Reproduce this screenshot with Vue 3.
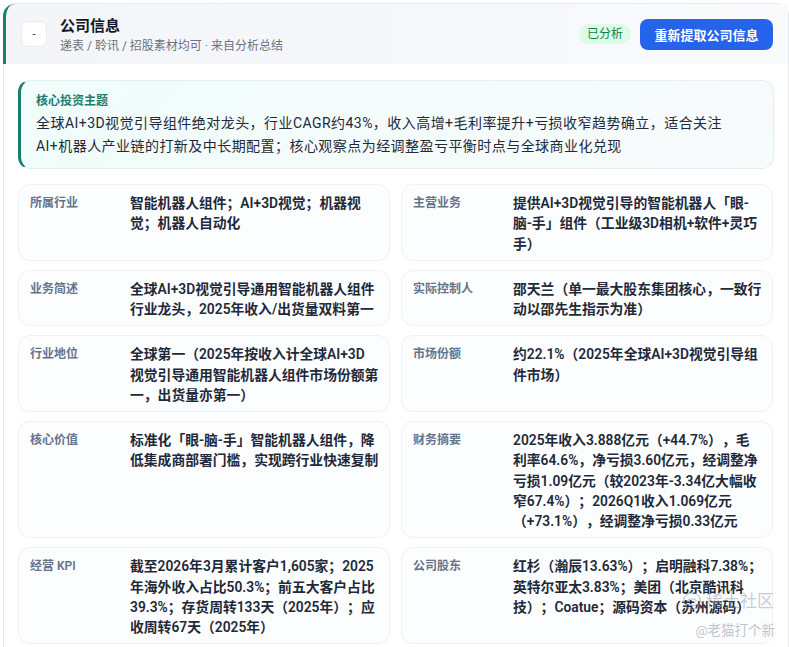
<template>
  <div class="page">
    <section class="company-card">
      <header class="card-head">
        <div class="head-left">
          <span class="head-icon">-</span>
          <div class="head-text">
            <h2>公司信息</h2>
            <p>递表 / 聆讯 / 招股素材均可 · 来自分析总结</p>
          </div>
        </div>
        <div class="head-right">
          <span class="status-pill">已分析</span>
          <button type="button" class="refetch-btn">重新提取公司信息</button>
        </div>
      </header>

      <div class="card-body">
        <div class="theme-box">
          <div class="theme-title">核心投资主题</div>
          <p>{{ theme }}</p>
        </div>

        <div class="info-grid">
          <article v-for="item in items" :key="item.label" class="info-cell">
            <span class="info-label">{{ item.label }}</span>
            <span class="info-value">{{ item.value }}</span>
          </article>
        </div>
      </div>
    </section>

    <div class="watermark">
      <div class="wm-top">
        <svg width="24" height="22" viewBox="0 0 26 22" fill="none" stroke="currentColor" stroke-width="1.5">
          <circle cx="13" cy="11" r="9" />
          <path d="M8 11c1.5-3 8.500-3 10 0M8 14.500c2.500 2 7.500 2 10 0" />
        </svg>
        <span>稀土社区</span>
      </div>
      <div class="wm-sub">@老猫打个新</div>
    </div>
  </div>
</template>

<script setup>
const theme = '全球AI+3D视觉引导组件绝对龙头，行业CAGR约43%，收入高增+毛利率提升+亏损收窄趋势确立，适合关注\nAI+机器人产业链的打新及中长期配置；核心观察点为经调整盈亏平衡时点与全球商业化兑现'

const items = [
  { label: '所属行业', value: '智能机器人组件；AI+3D视觉；机器视\n觉；机器人自动化' },
  { label: '主营业务', value: '提供AI+3D视觉引导的智能机器人「眼-\n脑-手」组件（工业级3D相机+软件+灵巧\n手）' },
  { label: '业务简述', value: '全球AI+3D视觉引导通用智能机器人组件\n行业龙头，2025年收入/出货量双料第一' },
  { label: '实际控制人', value: '邵天兰（单一最大股东集团核心，一致行\n动以邵先生指示为准）' },
  { label: '行业地位', value: '全球第一（2025年按收入计全球AI+3D\n视觉引导通用智能机器人组件市场份额第\n一，出货量亦第一）' },
  { label: '市场份额', value: '约22.1%（2025年全球AI+3D视觉引导组\n件市场）' },
  { label: '核心价值', value: '标准化「眼-脑-手」智能机器人组件，降\n低集成商部署门槛，实现跨行业快速复制' },
  { label: '财务摘要', value: '2025年收入3.888亿元（+44.7%），毛\n利率64.6%，净亏损3.60亿元，经调整净\n亏损1.09亿元（较2023年-3.34亿大幅收\n窄67.4%）；2026Q1收入1.069亿元\n（+73.1%），经调整净亏损0.33亿元' },
  { label: '经营 KPI', value: '截至2026年3月累计客户1,605家；2025\n年海外收入占比50.3%；前五大客户占比\n39.3%；存货周转133天（2025年）；应\n收周转67天（2025年）' },
  { label: '公司股东', value: '红杉（瀚辰13.63%）；启明融科7.38%；\n英特尔亚太3.83%；美团（北京酷讯科\n技）；Coatue；源码资本（苏州源码）' }
]
</script>

<style>
html, body {
  margin: 0;
  background: #fff;
}
</style>

<style scoped>
.page {
  position: relative;
  width: 789px;
  height: 647px;
  overflow: hidden;
  padding: 3px 0 0 3px;
  box-sizing: border-box;
  font-family: "Roboto", "Noto Sans CJK SC", sans-serif;
  color: #1f2937;
  text-spacing-trim: space-all;
}

.company-card {
  width: 785px;
  border: 1px solid #e5e9ef;
  border-left: 0;
  border-radius: 12px 12px 0 0;
  background: #fff;
}

.card-head {
  display: flex;
  align-items: center;
  justify-content: space-between;
  height: 60px;
  padding: 0 15px;
  border-left: 3px solid #1c7c6e;
  border-radius: 12px 0 0 0;
  background: linear-gradient(90deg, #f3f5f9, #f8fafc);
}

.head-left {
  display: flex;
  align-items: center;
  gap: 13px;
}

.head-icon {
  display: flex;
  align-items: center;
  justify-content: center;
  width: 26px;
  height: 26px;
  border: 1px solid #e8ebf0;
  border-radius: 7px;
  background: #fff;
  color: #333;
  font-size: 11px;
  box-sizing: border-box;
}

.head-text {
  padding-top: 2px;
}

.head-text h2 {
  margin: 0 0 2px;
  font-size: 15px;
  line-height: 20px;
  font-weight: 700;
  color: #111827;
}

.head-text p {
  margin: 0;
  font-size: 12px;
  line-height: 17px;
  color: #6b7280;
}

.head-right {
  display: flex;
  align-items: center;
  gap: 9px;
}

.status-pill {
  padding: 0 8px;
  border-radius: 999px;
  background: #dcfce7;
  color: #15803d;
  font-size: 12px;
  line-height: 20px;
}

.refetch-btn {
  width: 133px;
  height: 31px;
  padding: 0;
  border: 0;
  border-radius: 8px;
  background: #2563eb;
  color: #fff;
  font-family: inherit;
  font-size: 13px;
  font-weight: 700;
}

.card-body {
  padding: 16px 14px 14px;
  border-left: 1px solid #e5e9ef;
}

.theme-box {
  height: 89px;
  box-sizing: border-box;
  padding: 11px 18px 0 15px;
  border: 1px solid #e0f2f0;
  border-left: 3px solid #1c7c6e;
  border-radius: 12px;
  background: linear-gradient(135deg, #f0fdfa, #f8fafc);
}

.theme-title {
  font-size: 12px;
  line-height: 18px;
  font-weight: 700;
  color: #1c7c6e;
}

.theme-box p {
  margin: 2px 0 0;
  font-size: 14px;
  line-height: 23px;
  letter-spacing: 0.45px;
  white-space: pre;
  color: #1f2937;
}

.info-grid {
  display: grid;
  grid-template-columns: repeat(2, 372px);
  column-gap: 11px;
  row-gap: 9px;
  margin-top: 15px;
}

.info-cell {
  display: grid;
  grid-template-columns: 100px 1fr;
  padding: 8px 11px 6px;
  border: 1px solid #eef1f5;
  border-radius: 12px;
  background: #fcfdff;
}

.info-label {
  font-size: 12px;
  line-height: 20px;
  font-weight: 600;
  color: #64748b;
}

.info-value {
  font-size: 13.8px;
  line-height: 20.25px;
  font-weight: 600;
  white-space: pre;
  color: #1f2937;
}

.watermark {
  position: absolute;
  right: 14px;
  bottom: 8px;
  text-align: right;
  color: rgba(150, 156, 166, 0.5);
}

.wm-top {
  display: flex;
  align-items: center;
  justify-content: flex-end;
  gap: 2px;
  margin-right: 1px;
  font-size: 17px;
  line-height: 24px;
}

.wm-sub {
  margin-top: 8px;
  font-size: 13.5px;
  line-height: 18px;
  color: rgba(150, 156, 166, 0.6);
}
</style>
